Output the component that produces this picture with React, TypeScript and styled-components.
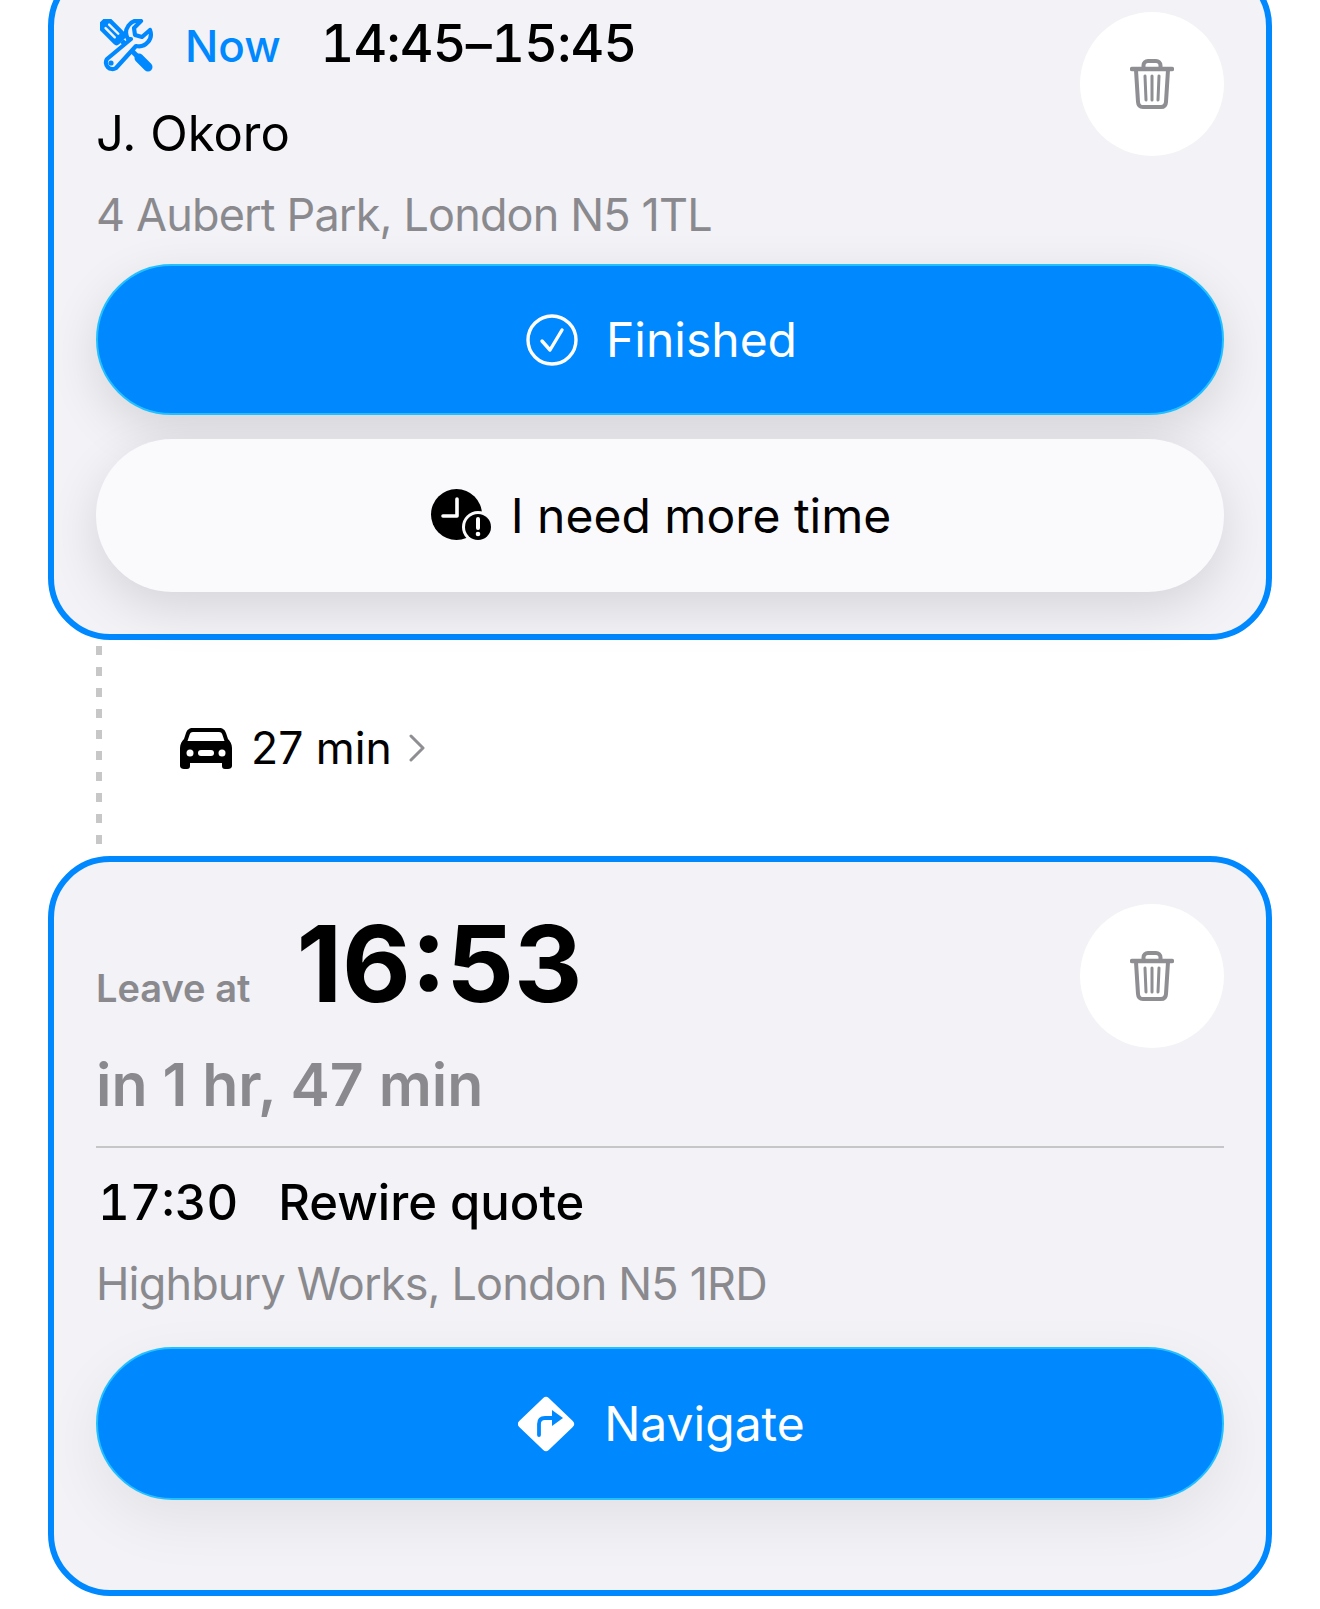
import React from "react";
import styled, { createGlobalStyle } from "styled-components";

const GlobalStyle = createGlobalStyle`
  html, body {
    margin: 0;
    padding: 0;
    background: #fff;
  }
  body {
    font-family: Inter, "Liberation Sans", sans-serif;
    -webkit-font-smoothing: antialiased;
  }
`;

const Page = styled.div`
  width: 1320px;
  height: 1609px;
  overflow: hidden;
`;

const List = styled.div`
  margin-top: -36px;
  padding: 0 48px;
`;

const Card = styled.section<{ $pb: number }>`
  box-sizing: border-box;
  border: 6px solid #0088ff;
  border-radius: 62px;
  background: #f2f2f7;
  padding: 42px 42px ${(p) => p.$pb}px;
`;

const Head = styled.div`
  display: flex;
  justify-content: space-between;
  align-items: flex-start;
`;

const Info = styled.div`
  display: flex;
  flex-direction: column;
`;

const StatusRow = styled.div`
  display: flex;
  align-items: baseline;
  height: 62px;
  line-height: 64px;
  padding-left: 4px;
`;

const NowLabel = styled.span`
  color: #0088ff;
  font-size: 44px;
  font-weight: 500;
  margin-left: 31px;
`;

const TimeRange = styled.span`
  color: #000;
  font-size: 52px;
  font-weight: 550;
  font-variant-numeric: tabular-nums;
  letter-spacing: -0.7px;
  margin-left: 40px;
`;

const Name = styled.div`
  color: #000;
  font-size: 49px;
  font-weight: 400;
  line-height: 80px;
  margin-top: 20px;
`;

const Address = styled.div<{ $mt: number }>`
  color: #8a8a8e;
  font-size: 45px;
  font-weight: 400;
  letter-spacing: -0.85px;
  line-height: 70px;
  margin-top: ${(p) => p.$mt}px;
`;

const TrashButton = styled.button`
  flex: none;
  width: 144px;
  height: 144px;
  padding: 0;
  border: 0;
  border-radius: 50%;
  background: #fff;
  display: flex;
  align-items: center;
  justify-content: center;
`;

const Actions = styled.div`
  display: flex;
  flex-direction: column;
  gap: 24px;
`;

const PrimaryButton = styled.button<{ $mt?: number; $h: number; $soft?: boolean }>`
  box-sizing: border-box;
  width: 100%;
  height: ${(p) => p.$h}px;
  margin-top: ${(p) => p.$mt ?? 0}px;
  padding: 0 0 0 3px;
  border: 2px solid #22c0ff;
  border-radius: 77px;
  background: #0088ff;
  color: #fff;
  font-family: inherit;
  font-size: 48px;
  font-weight: 400;
  display: flex;
  align-items: center;
  justify-content: center;
  gap: 28px;
  box-shadow: ${(p) =>
    p.$soft ? "0 20px 60px rgba(0, 0, 0, 0.07)" : "0 16px 50px rgba(0, 0, 0, 0.12)"};
`;

const SecondaryButton = styled.button`
  box-sizing: border-box;
  width: 100%;
  height: 153px;
  padding: 0 0 0 2px;
  border: 0;
  border-radius: 76px;
  background: #fafafd;
  color: #000;
  font-family: inherit;
  font-size: 48px;
  font-weight: 400;
  display: flex;
  align-items: center;
  justify-content: center;
  gap: 18px;
  box-shadow: 0 16px 50px rgba(0, 0, 0, 0.12);
`;

const Transit = styled.div`
  display: flex;
  align-items: center;
  height: 216px;
  padding-left: 48px;
`;

const Connector = styled.div`
  width: 6px;
  height: 198px;
  margin: -6px 0 0;
  background: repeating-linear-gradient(to bottom, #c7c7c7 0 9px, transparent 9px 21px);
`;

const Drive = styled.div`
  display: flex;
  align-items: center;
  margin-left: 78px;
`;

const DriveTime = styled.span`
  color: #000;
  font-size: 44.5px;
  font-weight: 400;
  margin-left: 19px;
  margin-right: 17px;
`;

const LeaveRow = styled.div`
  display: flex;
  align-items: baseline;
  height: 120px;
  line-height: 120px;
`;

const LeaveLabel = styled.span`
  color: #8a8a8e;
  font-size: 38px;
  font-weight: 600;
`;

const LeaveTime = styled.span`
  color: #000;
  font-size: 106px;
  font-weight: 700;
  margin-left: 46px;
`;

const Countdown = styled.div`
  color: #8a8a8e;
  font-size: 59px;
  font-weight: 600;
  line-height: 80px;
  margin-top: 21px;
`;

const Divider = styled.hr`
  height: 2px;
  margin: 21px 0 20px;
  border: 0;
  background: #c6c6c8;
`;

const JobRow = styled.div`
  display: flex;
  align-items: baseline;
  line-height: 70px;
  color: #000;
  font-size: 49px;
  font-weight: 500;
`;

const JobTime = styled.span`
  font-variant-numeric: tabular-nums;
  margin-left: 2px;
  margin-right: 40px;
`;

const ToolsSvg = styled.svg`
  flex: none;
  align-self: center;
  margin-top: 6px;
`;

const ToolsIcon = () => (
  <ToolsSvg width="54" height="54" viewBox="0 0 54 54">
    <g transform="rotate(-45 13 13)">
      <rect x="5" y="-3" width="16" height="29" rx="4" fill="#0088ff" />
      <path d="M10.500 5v13M15.500 5v13" stroke="#f2f2f7" strokeWidth="2.400" strokeLinecap="round" />
    </g>
    <path d="M22 22 42 42" stroke="#0088ff" strokeWidth="5" />
    <path d="M39 39 48 48" stroke="#0088ff" strokeWidth="9" strokeLinecap="round" />
    <path
      d="M31 20 7 40a6.500 6.500 0 0 0 9 9l20-22a12 12 0 0 0 14-16l-8 7-7-2-1-7 7-7a12 12 0 0 0-13 18Z"
      fill="#f2f2f7"
      stroke="#0088ff"
      strokeWidth="4.200"
      strokeLinejoin="round"
    />
    <circle cx="11" cy="44" r="2.600" fill="#0088ff" />
  </ToolsSvg>
);

const TrashIcon = () => (
  <svg width="44" height="50" viewBox="0 0 44 50" fill="none" stroke="#8e8e93" strokeLinecap="round">
    <path d="M2 10h40" strokeWidth="4.400" />
    <path d="M13.500 9V6.500C13.500 3.500 15.500 2 18 2h8c2.500 0 4.500 1.500 4.500 4.500V9" strokeWidth="4" />
    <path d="M6 11l2 32c.2 3 2 5 5 5h18c3 0 4.800-2 5-5l2-32" strokeWidth="4" />
    <path d="M15 17l1 24M22 17v24M29 17l-1 24" strokeWidth="3" />
  </svg>
);

const CheckIcon = () => (
  <svg width="52" height="52" viewBox="0 0 52 52" fill="none" stroke="#fff">
    <circle cx="26" cy="26" r="24" strokeWidth="3.400" />
    <path d="M16 27l8 9 12-20" strokeWidth="3.400" strokeLinecap="round" strokeLinejoin="round" />
  </svg>
);

const ClockAlertIcon = () => (
  <svg width="62" height="54" viewBox="0 0 62 54">
    <circle cx="25.500" cy="25.500" r="25.500" fill="#000" />
    <path d="M26 10v17H12" fill="none" stroke="#fff" strokeWidth="3.600" strokeLinecap="round" strokeLinejoin="round" />
    <circle cx="47" cy="38" r="16" fill="#fafafd" />
    <circle cx="47" cy="38" r="13" fill="#000" />
    <path d="M47 30v9" stroke="#fff" strokeWidth="4" strokeLinecap="round" />
    <circle cx="47" cy="45" r="2.300" fill="#fff" />
  </svg>
);

const NavigateIcon = () => (
  <svg width="58" height="58" viewBox="0 0 58 58">
    <polygon points="28,6 52,29 28,52 4,29" fill="#fff" stroke="#fff" strokeWidth="8" strokeLinejoin="round" />
    <path d="M21 40V29c0-4 2-6 6-6h8" fill="none" stroke="#0088ff" strokeWidth="3.800" strokeLinecap="round" />
    <polygon points="34,15 45,23 34,31" fill="#0088ff" />
  </svg>
);

const CarIcon = () => (
  <svg width="52" height="41" viewBox="0 0 52 41">
    <path
      d="M13 0H39C43 0 45 2 46 5L48 11C50 13 52 16 52 20V38C52 40 50 41 48 41H45C43 41 42 40 42 38V35H10V38C10 40 9 41 7 41H4C2 41 0 40 0 38V20C0 16 2 13 4 11L6 5C7 2 9 0 13 0Z"
      fill="#000"
    />
    <path d="M13 4H39C41 4 42 5 42.500 7L44.500 13H7.500L9.500 7C10 5 11 4 13 4Z" fill="#fff" />
    <circle cx="10" cy="25" r="3.500" fill="#fff" />
    <circle cx="42" cy="25" r="3.500" fill="#fff" />
    <rect x="18" y="22" width="16" height="6" rx="3" fill="#fff" />
  </svg>
);

const ChevronIcon = () => (
  <svg width="16" height="28" viewBox="0 0 16 28" fill="none" stroke="#8e8e93" strokeWidth="3" strokeLinecap="round" strokeLinejoin="round">
    <path d="M2 2l12 12L2 26" />
  </svg>
);

const App = () => {
  return (
    <Page>
      <GlobalStyle />
      <List>
        <Card $pb={42}>
          <Head>
            <Info>
              <StatusRow>
                <ToolsIcon />
                <NowLabel>Now</NowLabel>
                <TimeRange>14:45–15:45</TimeRange>
              </StatusRow>
              <Name>J. Okoro</Name>
              <Address $mt={6}>4 Aubert Park, London N5 1TL</Address>
            </Info>
            <TrashButton>
              <TrashIcon />
            </TrashButton>
          </Head>
          <Actions>
            <PrimaryButton $mt={14} $h={151}>
              <CheckIcon />
              Finished
            </PrimaryButton>
            <SecondaryButton>
              <ClockAlertIcon />I need more time
            </SecondaryButton>
          </Actions>
        </Card>

        <Transit>
          <Connector />
          <Drive>
            <CarIcon />
            <DriveTime>27 min</DriveTime>
            <ChevronIcon />
          </Drive>
        </Transit>

        <Card $pb={90}>
          <Head>
            <Info>
              <LeaveRow>
                <LeaveLabel>Leave at</LeaveLabel>
                <LeaveTime>16:53</LeaveTime>
              </LeaveRow>
              <Countdown>in 1 hr, 47 min</Countdown>
            </Info>
            <TrashButton>
              <TrashIcon />
            </TrashButton>
          </Head>
          <Divider />
          <JobRow>
            <JobTime>17:30</JobTime>
            Rewire quote
          </JobRow>
          <Address $mt={11}>Highbury Works, London N5 1RD</Address>
          <PrimaryButton $mt={28} $h={153} $soft>
            <NavigateIcon />
            Navigate
          </PrimaryButton>
        </Card>
      </List>
    </Page>
  );
};

export default App;
